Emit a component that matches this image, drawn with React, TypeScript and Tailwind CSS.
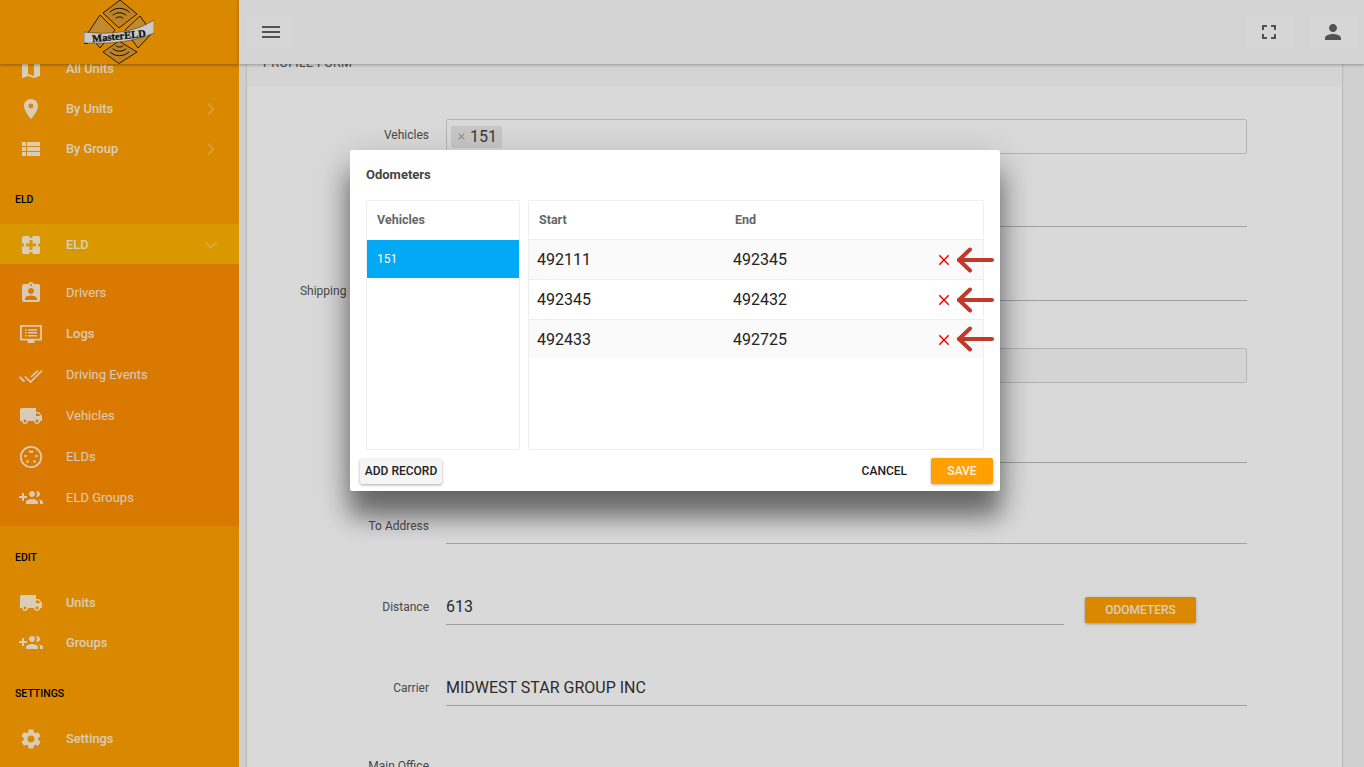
import React from 'react';
import {
  MdMap,
  MdPlace,
  MdViewList,
  MdAssignmentInd,
  MdLocalShipping,
  MdSettings,
  MdKeyboardArrowRight,
  MdKeyboardArrowDown,
  MdMenu,
  MdFullscreen,
  MdPerson,
  MdClose,
} from 'react-icons/md';

const FONT = "font-['Roboto',sans-serif]";

// Icons that the icon pack does not have
const EldIcon = () => (
  <svg viewBox="0 0 24 24" className="h-6 w-6" fill="currentColor">
    <path
      fillRule="evenodd"
      d="M5 3h14a2 2 0 0 1 2 2v14a2 2 0 0 1-2 2H5a2 2 0 0 1-2-2V5a2 2 0 0 1 2-2zM10.500 3v2h3V3zM10.500 21v-2h3v2zM3 10.500h2v3H3zM21 10.500h-2v3h2zM10.500 7h3v3.500H17v3h-3.500V17h-3v-3.500H7v-3h3.500z"
    />
  </svg>
);

const LogsIcon = () => (
  <svg viewBox="0 0 24 24" className="h-6 w-6" fill="currentColor">
    <path
      fillRule="evenodd"
      d="M2 3h20a1 1 0 0 1 1 1v13.500a1 1 0 0 1-1 1h-6.500V21h-7v-2.500H2a1 1 0 0 1-1-1V4a1 1 0 0 1 1-1zM2.800 4.800v12h18.400v-12z"
    />
    <path d="M6 7.300h1.600v1.500H6zM9 7.300h9v1.500H9zM6 10.100h1.600v1.500H6zM9 10.100h9v1.500H9zM6 12.900h1.600v1.500H6zM9 12.900h9v1.500H9z" />
  </svg>
);

const ChecksIcon = () => (
  <svg viewBox="0 0 24 24" className="h-6 w-6" fill="none" stroke="currentColor" strokeWidth="1.700">
    <path d="M0.500 14 5.500 18.500" />
    <path d="M6 13.500 11.500 19 23 7.500" />
    <path d="M12 14 19 7.500" />
  </svg>
);

const PortIcon = () => (
  <svg viewBox="0 0 24 24" className="h-6 w-6" fill="currentColor">
    <circle cx="12" cy="12" r="10.200" fill="none" stroke="currentColor" strokeWidth="1.800" />
    <rect x="9.500" y="5.500" width="5" height="2.200" rx="1.100" />
    <circle cx="6.500" cy="11" r="1.300" />
    <circle cx="17.500" cy="11" r="1.300" />
    <circle cx="8.500" cy="16.500" r="1.300" />
    <circle cx="15.500" cy="16.500" r="1.300" />
  </svg>
);

const GroupAddIcon = () => (
  <svg viewBox="0 0 24 24" className="h-6 w-6" fill="currentColor">
    <path d="M8 10H5V7H3v3H0v2h3v3h2v-3h3v-2zm10 1c1.660 0 2.990-1.340 2.990-3S19.660 5 18 5c-.320 0-.630.050-.910.140.570.810.900 1.790.900 2.860s-.340 2.040-.900 2.860c.280.090.590.140.910.140zm-5 0c1.660 0 3-1.340 3-3s-1.340-3-3-3-3 1.340-3 3 1.340 3 3 3zm6.620 2.160c.830.730 1.380 1.660 1.380 2.840v2h3v-2c0-1.540-2.370-2.490-4.380-2.840zM13 13c-2 0-6 1-6 3v2h12v-2c0-2-4-3-6-3z" />
  </svg>
);

const Logo = () => (
  <svg viewBox="0 0 70 64" className="h-16 w-[70px]">
    <g stroke="#1a1206" strokeWidth="0.900" strokeLinejoin="round">
      <path d="M36 0 53 14 35 28 19 13z" fill="#e09a2c" />
      <path d="M35 41 53 52 35 63.500 19 52z" fill="#e09a2c" />
      <path d="M16 15 31 30 16 48 4 33z" fill="#e3a23a" />
      <path d="M56 16 68 33 54 48 41 30z" fill="#e3a23a" />
    </g>
    <g fill="none" stroke="#1a1206" strokeWidth="1" strokeLinecap="round">
      <path d="M26 12c5-5 14-5 19 0" />
      <path d="M29 15c3.500-3 9.500-3 13 0" />
      <path d="M32 18c2-1.500 5-1.500 7 0" />
      <path d="M26 52c5 5 14 5 19 0" />
      <path d="M29 49c3.500 3 9.500 3 13 0" />
      <path d="M32 46c2 1.500 5 1.500 7 0" />
    </g>
    <path d="M0 32C25 35 50 33 70 20V33C50 42 25 44 0 43Z" fill="#eeeeea" stroke="#1a1206" strokeWidth="0.400" />
    <path d="M0 43c-.500.700 1 1.200 3 .800l2-.800z" fill="#1a1206" />
    <text
      x="35"
      y="39.500"
      textAnchor="middle"
      transform="rotate(-6 35 37)"
      fill="#111"
      stroke="#111"
      strokeWidth="0.300"
      fontSize="10.500"
      fontWeight="700"
      fontFamily="'Liberation Serif',serif"
    >
      MasterELD
    </text>
  </svg>
);

interface NavRow {
  label: string;
  icon: React.ReactNode;
  arrow?: boolean;
  bold?: boolean;
}

const topRows: NavRow[] = [
  { label: 'All Units', icon: <MdMap size={24} /> },
  { label: 'By Units', icon: <MdPlace size={24} />, arrow: true },
  { label: 'By Group', icon: <MdViewList size={24} />, arrow: true },
];

const eldRows: NavRow[] = [
  { label: 'Drivers', icon: <MdAssignmentInd size={24} /> },
  { label: 'Logs', icon: <LogsIcon />, bold: true },
  { label: 'Driving Events', icon: <ChecksIcon /> },
  { label: 'Vehicles', icon: <MdLocalShipping size={24} /> },
  { label: 'ELDs', icon: <PortIcon /> },
  { label: 'ELD Groups', icon: <GroupAddIcon /> },
];

const SideItem = ({ row, tall }: { row: NavRow; tall?: boolean }) => (
  <div className={`flex items-center pl-[19px] pr-4 pt-[2px] text-white/85 ${tall ? 'h-[41px]' : 'h-10'}`}>
    <span className="flex w-6 justify-center">{row.icon}</span>
    <span className={`ml-[23px] flex-1 ${tall ? 'text-[13px]' : 'text-[12.8px] font-medium'} ${row.bold ? 'font-medium' : ''}`}>{row.label}</span>
    {row.arrow && <MdKeyboardArrowRight size={24} className="opacity-30" />}
  </div>
);

const SideHeading = ({ children }: { children: React.ReactNode }) => (
  <div className="h-14 pl-[15px] pt-6 text-[10.500px] font-medium leading-4 text-black">{children}</div>
);

const Sidebar = () => (
  <aside className="relative h-screen w-[239px] shrink-0 overflow-hidden bg-[#ffa000]">
    <div className="relative z-10 flex h-16 justify-center bg-[#ffa000] pr-[1px] shadow-[0_1px_3px_rgba(0,0,0,0.35)]">
      <Logo />
    </div>
    <div className="-mt-4">
      {topRows.map((r) => (
        <SideItem key={r.label} row={r} />
      ))}
      <SideHeading>ELD</SideHeading>
      <div className="flex h-10 items-center bg-[#ffb300] pl-[19px] pr-4 pt-[2px] text-white/85">
        <span className="flex w-6 justify-center">
          <EldIcon />
        </span>
        <span className="ml-[23px] flex-1 text-[12.8px] font-medium">ELD</span>
        <MdKeyboardArrowDown size={24} className="opacity-30" />
      </div>
      <div className="bg-[#ff8f00] pb-[9px] pt-[7px]">
        {eldRows.map((r) => (
          <SideItem key={r.label} row={r} tall />
        ))}
      </div>
      <SideHeading>EDIT</SideHeading>
      <SideItem row={{ label: 'Units', icon: <MdLocalShipping size={24} /> }} />
      <SideItem row={{ label: 'Groups', icon: <GroupAddIcon /> }} />
      <SideHeading>SETTINGS</SideHeading>
      <SideItem row={{ label: 'Settings', icon: <MdSettings size={24} /> }} />
    </div>
  </aside>
);

const TopButton = ({ children }: { children: React.ReactNode }) => (
  <button className="flex h-8 w-12 items-center justify-center bg-white/40 text-[#616161]">{children}</button>
);

const Label = ({ children, className = '' }: { children?: React.ReactNode; className?: string }) => (
  <div className={`w-[182px] shrink-0 whitespace-nowrap text-right text-[12px] text-[#555] ${className}`}>{children}</div>
);

const LineField = ({ height, value, label, labelClass }: { height: string; value?: string; label?: string; labelClass?: string }) => (
  <div className={`flex items-end pr-[95px] ${height}`}>
    <Label className={labelClass}>{label}</Label>
    <div className="ml-[17px] flex h-9 flex-1 items-center border-b border-[#bdbdbd] text-base text-[#333]">{value}</div>
  </div>
);

const Form = () => (
  <div className="pt-[33px]">
    <div className="flex items-center pr-[95px]">
      <Label className="mb-[3px]">Vehicles</Label>
      <div className="ml-[17px] flex h-[35px] flex-1 items-center rounded-[2px] border border-[#d4d4d4] pl-1">
        <span className="flex h-[22px] w-[51px] items-center rounded-[2px] bg-[#eaeaea] pl-[5px] text-base text-[#444]">
          <MdClose size={11} className="mr-[3px] text-[#a0a0a0]" />
          151
        </span>
      </div>
    </div>
    <LineField height="h-[73px]" />
    <LineField height="h-[74px]" label="Shipping Documents No" labelClass="mb-[1px]" />
    <div className="mt-[47px] flex pr-[95px]">
      <Label />
      <div className="ml-[17px] h-[35px] flex-1 rounded-[2px] border border-[#d4d4d4] bg-[#fafafa]" />
    </div>
    <LineField height="h-[80px]" />
    <LineField height="h-[81px]" label="To Address" labelClass="mb-[9px]" />
    <div className="flex h-[81px] items-end">
      <Label className="mb-[9px]">Distance</Label>
      <div className="ml-[17px] flex h-9 w-[618px] items-center border-b border-[#bdbdbd] text-base text-[#333]">613</div>
      <button className="mb-[2px] ml-[21px] h-[26px] w-[111px] rounded-[2px] bg-[#ffa000] text-xs font-medium text-white/85 shadow-[0_1px_3px_rgba(0,0,0,0.3)]">
        ODOMETERS
      </button>
    </div>
    <LineField height="h-[81px]" label="Carrier" labelClass="mb-[9px]" value="MIDWEST STAR GROUP INC" />
    <div className="mt-[51px]">
      <Label>Main Office</Label>
    </div>
  </div>
);

interface OdoRow {
  start: string;
  end: string;
  arrowTop: string;
}

const odoRows: OdoRow[] = [
  { start: '492111', end: '492345', arrowTop: 'top-[7px]' },
  { start: '492345', end: '492432', arrowTop: 'top-[7px]' },
  { start: '492433', end: '492725', arrowTop: 'top-[6px]' },
];

// Red annotation arrow that sticks out of the table on the right
const PointerArrow = ({ top }: { top: string }) => (
  <svg
    viewBox="0 0 38 26"
    className={`absolute left-[427px] h-[26px] w-[38px] ${top}`}
    fill="none"
    stroke="#c0392b"
    strokeWidth="4"
    strokeLinecap="round"
    strokeLinejoin="round"
  >
    <path d="M3 13H36" />
    <path d="M14 2.500 3 13 14 23.500" />
  </svg>
);

const Modal = () => (
  <div className="absolute left-[350px] top-[150px] h-[341px] w-[650px] rounded-[2px] bg-white shadow-[0_26px_24px_rgba(0,0,0,0.42),0_12px_36px_rgba(0,0,0,0.25)]">
    <div className="pl-4 pt-4 text-[13px] font-bold leading-[17px] text-[#444]">Odometers</div>
    <div className="mt-[17px] flex gap-2 px-4">
      <div className="h-[250px] w-[154px] rounded-[2px] border border-[#eeeeee]">
        <div className="flex h-[39px] items-center pb-px pl-[10px] text-[12.5px] font-bold text-[#666]">Vehicles</div>
        <div className="flex h-[38px] items-center bg-[#03a9f4] pl-[10px] text-xs text-white">151</div>
      </div>
      <div className="h-[250px] w-[456px] rounded-[2px] border border-[#eeeeee]">
        <div className="flex h-[38px] items-center pl-[10px] text-[12.5px] font-bold text-[#666]">
          <span className="w-[196px]">Start</span>
          <span>End</span>
        </div>
        {odoRows.map((r, i) => (
          <div
            key={r.start}
            className={`relative flex items-center border-t border-[#eeeeee] pl-2 text-base text-[#222] ${i % 2 === 0 ? 'bg-[#fafafa]' : 'bg-white'} ${i === 2 ? 'h-[39px] pt-px' : 'h-10'}`}
          >
            <span className="w-[196px]">{r.start}</span>
            <span className="w-[196px]">{r.end}</span>
            <MdClose size={18} className="ml-[6px] text-[#f00]" />
            <PointerArrow top={r.arrowTop} />
          </div>
        ))}
      </div>
    </div>
    <div className="mt-2 flex items-center pl-[10px] pr-[7px]">
      <button className="h-[25px] w-[82px] rounded-[2px] bg-[#f5f5f5] text-xs font-medium text-[#222] shadow-[0_1px_3px_rgba(0,0,0,0.35)]">
        ADD RECORD
      </button>
      <button className="ml-auto text-xs font-medium text-[#222]">CANCEL</button>
      <button className="ml-6 h-[26px] w-[62px] rounded-[2px] bg-[#ffa000] text-xs font-medium text-white/85 shadow-[0_1px_3px_rgba(0,0,0,0.3)]">
        SAVE
      </button>
    </div>
  </div>
);

export default function App() {
  return (
    <div className={`relative flex h-screen w-full overflow-hidden bg-[#f4f4f4] ${FONT}`}>
      <Sidebar />
      <div className="flex h-screen min-w-0 flex-1 flex-col">
        <header className="relative z-10 flex h-16 shrink-0 items-center justify-between bg-[#fafafa] pl-2 pr-[7px] shadow-[0_1px_3px_rgba(0,0,0,0.3)]">
          <TopButton>
            <MdMenu size={24} />
          </TopButton>
          <div className="flex gap-4">
            <TopButton>
              <MdFullscreen size={24} />
            </TopButton>
            <TopButton>
              <MdPerson size={24} />
            </TopButton>
          </div>
        </header>
        <main className="-mt-6 ml-2 mr-[22px] flex-1 bg-white shadow-[0_0_2px_rgba(0,0,0,0.3)]">
          <div className="flex h-[46px] items-center bg-[#fafafa] pl-4 text-[12.5px] tracking-wide text-[#555]">PROFILE FORM</div>
          <Form />
        </main>
      </div>
      <div className="absolute inset-0 z-20 bg-black/15" />
      <div className="absolute inset-0 z-30">
        <Modal />
      </div>
    </div>
  );
}
